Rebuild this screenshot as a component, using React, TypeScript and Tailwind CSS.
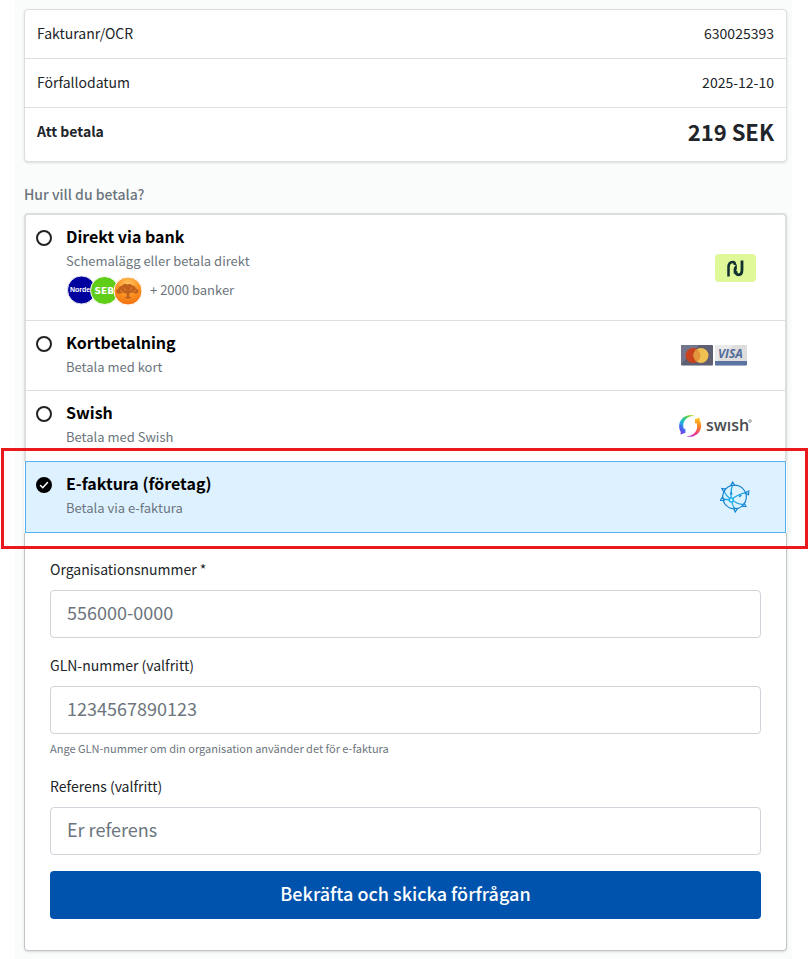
import { useState, type ReactNode } from "react";

function BankLogos() {
  return (
    <svg width="76" height="30" viewBox="0 0 76 30" aria-hidden="true">
      <defs>
        <radialGradient id="orange" cx="0.5" cy="0.25" r="0.75">
          <stop offset="0" stopColor="#ffc45c" />
          <stop offset="0.6" stopColor="#fb8e1f" />
          <stop offset="1" stopColor="#f0700f" />
        </radialGradient>
      </defs>
      <circle cx="15.5" cy="15" r="14" fill="#00009e" stroke="#e6e6ee" />
      <text x="4" y="17" fontSize="7" fontWeight="bold" fill="#fff" fontFamily="Liberation Sans, sans-serif">
        Norde
      </text>
      <circle cx="38.5" cy="15.500" r="14" fill="#60cd18" stroke="#fff" />
      <text x="28.500" y="18.500" fontSize="9" fontWeight="bold" fill="#fff" fontFamily="DejaVu Sans, sans-serif">
        SEB
      </text>
      <circle cx="62" cy="16" r="14" fill="url(#orange)" stroke="#fff" />
      <g fill="#c0601c">
        <path d="M51 17.500c-2-1 0-3.500 1.500-3.500-.5-2 2-3.500 3.500-3 .5-2 3.500-2.500 5-1.500 2-1.200 4.500-.5 5 1 2-.5 4 1 3.500 3 2 0 4 2.500 2.500 4-1 1.500-3 1.500-4 .5l-2.500-.5-2 1h-4l-2-1-2.500.7c-1.500 1-4 .8-4-.7z" />
        <path d="M60.800 17h2.400v4.500l3 1.700-3-.2-.4 1.200-.8-.9-.8.9-.4-1.200-3 .2 3-1.700z" />
      </g>
      <path d="M54 15.500l3 1.500M58 12.500l2 3.500M66 12.500l-2 3.500M70 15.500l-3 1.500" stroke="#f08a2c" strokeWidth="0.800" />
    </svg>
  );
}

function DirectLogo() {
  return (
    <svg width="41" height="28" viewBox="0 0 41 28" aria-hidden="true">
      <rect width="41" height="28" rx="4" fill="#dff998" />
      <g fill="none" stroke="#10302f" strokeWidth="2.500">
        <path d="M13.500 22.500V13.500Q13.500 8 17.800 8q2.200 0 2.200 3" />
        <path d="M20.800 17q0 3.800 2.700 3.800 3.500 0 3.500-5V6.500" strokeWidth="2.800" />
      </g>
      <path d="M18.600 15.500q.3-3 3.200-5.500v5q-.2 3-3 5.500z" fill="#10302f" />
    </svg>
  );
}

function CardLogos() {
  return (
    <svg width="75" height="21" viewBox="0 0 75 21" aria-label="Mastercard, Visa" role="img">
      <rect width="32" height="20.500" rx="1" fill="#5f5f74" />
      <path d="M1 0H18L0 19V1z" fill="#74758b" />
      <circle cx="12" cy="10.500" r="7.500" fill="#c9431f" />
      <circle cx="20" cy="10.500" r="7.500" fill="#f0c052" />
      <path d="M16 4.200a7.500 7.500 0 0 1 0 12.600 7.500 7.500 0 0 1 0-12.600z" fill="#e2953a" />
      <rect x="34" width="32" height="20.500" rx="1" fill="#dedddc" />
      <path d="M35 0h18L36 16h-2V1z" fill="#e9e9e9" />
      <path d="M34 16h32v3.500a1 1 0 0 1-1 1H35a1 1 0 0 1-1-1z" fill="#5c74a3" />
      <text x="37" y="13" fontSize="12" fontWeight="bold" fontStyle="italic" fill="#526b9b" fontFamily="Open Sans, sans-serif">
        VISA
      </text>
    </svg>
  );
}

function SwishLogo() {
  return (
    <svg width="77" height="24" viewBox="0 0 77 24" aria-label="Swish" role="img">
      <defs>
        <linearGradient id="swish-left" x1="0.8" y1="0" x2="0.2" y2="1">
          <stop offset="0" stopColor="#b8dc22" />
          <stop offset="0.25" stopColor="#3ccb62" />
          <stop offset="0.55" stopColor="#1eb6dc" />
          <stop offset="0.75" stopColor="#3d6df0" />
          <stop offset="1" stopColor="#7a35e8" />
        </linearGradient>
        <linearGradient id="swish-right" x1="0.5" y1="0" x2="0.3" y2="1">
          <stop offset="0" stopColor="#ffc21c" />
          <stop offset="0.45" stopColor="#f7752b" />
          <stop offset="0.75" stopColor="#ef3d78" />
          <stop offset="1" stopColor="#c33de0" />
        </linearGradient>
      </defs>
      <path d="M15.500 1.700C9-.5 1.500 3.500.3 10.500c-.5 3 .3 5.700 1.500 7.500l-.3 2.500 5-1.700-.2-4.500-1.300 1C3 11 5 4.500 11 2.500q2-.8 4.500-.8z" fill="url(#swish-left)" />
      <path d="M7.200 22.200c6.500 2.200 13.500-1.700 14.800-8.700.5-3-.3-5.700-1.500-7.500l.2-2.500-4.700 1.700v4.500l1.300-1C19.500 13 17.500 19.500 11.500 21.400q-2 .8-4.300.8z" fill="url(#swish-right)" />
      <text x="27" y="17" fontSize="16" fontWeight="600" fill="#4a4b4f" fontFamily="Open Sans, sans-serif">
        swısh
      </text>
      <circle cx="71" cy="7" r="1.300" fill="none" stroke="#77787b" strokeWidth="0.800" />
    </svg>
  );
}

function NetworkLogo() {
  return (
    <svg width="36" height="32" viewBox="0 0 36 32" fill="none" stroke="#1685d3" aria-hidden="true">
      <circle cx="14.500" cy="16" r="11.800" strokeWidth="1.200" />
      <g stroke="#20a7e4" strokeWidth="1.300">
        <path d="M12.700 3q-2.500 7-1.400 16M3.300 9.300q3 6 8 9.700M27 11.700q-9 1-15.700 7.300M24.300 24q-7-1-13-5M15.700 29q-3.500-4-4.400-10M2 18l9.300 1" />
      </g>
      <g fill="#def1ff" strokeWidth="1.200">
        <path d="M12.700 1l2 3.300h-4zM1.800 7.500l3.700.3-1.700 3.300zM28.800 10l-.3 3.800-3.300-2zM2.500 16l1.700 3.400-3.900.1zM26 25.500l-3.700-.1 1.900-3.200zM15.200 31l-1.500-3.600 3.800.2z" />
      </g>
      <circle cx="11.300" cy="19" r="2" stroke="#19b4ed" strokeWidth="1.500" fill="#def1ff" />
      <path d="M11.300 9.500 12.700 13.500h-3zM18.500 14.500l3.800-.7-2.600 3z" fill="#1692da" stroke="none" />
    </svg>
  );
}

type OptionProps = {
  value: string;
  title: string;
  text: string;
  logo: ReactNode;
  selected: string;
  onSelect: (value: string) => void;
  children?: ReactNode;
};

function Option({ value, title, text, logo, selected, onSelect, children }: OptionProps) {
  return (
    <label className="flex cursor-pointer items-center pr-[29px] pb-[11px] pt-[9px]">
      <span className="grid w-10 shrink-0 place-items-center self-start pt-[6px] pr-1">
        <input
          type="radio"
          name="method"
          value={value}
          checked={selected === value}
          onChange={() => onSelect(value)}
          className="peer col-start-1 row-start-1 size-4 appearance-none rounded-full border-2 border-[#222] bg-white checked:border-black checked:bg-black"
        />
        <svg viewBox="0 0 16 16" className="invisible col-start-1 row-start-1 size-4 peer-checked:visible" aria-hidden="true">
          <path d="M4.500 8.500 6.800 10.700 11.500 5.500" fill="none" stroke="#fff" strokeWidth="1.500" strokeLinecap="round" />
        </svg>
      </span>
      <span className="flex-1">
        <span className="mb-px block text-base leading-6 font-bold text-black">{title}</span>
        <span className="block text-[13px] leading-6 text-[#6c757d]">{text}</span>
        {children}
      </span>
      <span className="pt-0.5">{logo}</span>
    </label>
  );
}

type FieldProps = {
  id: string;
  label: string;
  placeholder: string;
  hint?: string;
  required?: boolean;
};

function Field({ id, label, placeholder, hint, required }: FieldProps) {
  return (
    <div className="mb-4">
      <label htmlFor={id} className="mb-[10px] block text-sm leading-[22px]">
        {label}
      </label>
      <input
        id={id}
        type="text"
        required={required}
        placeholder={placeholder}
        className="block h-12 w-full rounded border border-[#ced4da] bg-white px-4 pb-1 text-lg placeholder:text-[#6c757d]"
      />
      {hint && <p className="mt-1 text-[11px] leading-[21px] text-[#6c757d]">{hint}</p>}
    </div>
  );
}

export default function App() {
  const [method, setMethod] = useState("efaktura");
  const shared = { selected: method, onSelect: setMethod };

  return (
    <main className="mr-[17px] ml-[15px] bg-[#fafcfb] pt-[9px] pr-[5px] pb-2 pl-[9px] font-['Noto_Sans_CJK_SC','Source_Sans_3',sans-serif] text-[#212529]">
      {/* Invoice summary */}
      <dl className="divide-y divide-[#dedfe0] rounded border border-[#dcdedf] bg-white text-sm leading-6 shadow-sm">
        <div className="flex justify-between px-3 pt-[11px] pb-[13px]">
          <dt>Fakturanr/OCR</dt>
          <dd>630025393</dd>
        </div>
        <div className="flex justify-between px-3 pt-[11px] pb-[13px]">
          <dt>Förfallodatum</dt>
          <dd>2025-12-10</dd>
        </div>
        <div className="flex justify-between px-3 pt-[11px] pb-[18px] font-bold">
          <dt>Att betala</dt>
          <dd className="text-[22px] leading-6">219 SEK</dd>
        </div>
      </dl>

      <h2 id="method-title" className="mt-5 mb-[7px] text-sm leading-6 font-medium text-[#6c757d]">
        Hur vill du betala?
      </h2>

      <div className="rounded bg-white shadow-sm">
        <div role="radiogroup" aria-labelledby="method-title">
          <div className="divide-y divide-[#dedede] rounded-t border-2 border-b-0 border-[#dedede] pb-px">
            <Option {...shared} value="bank" title="Direkt via bank" text="Schemalägg eller betala direkt" logo={<DirectLogo />}>
              <span className="mb-0.5 flex items-center gap-2 text-[13px] leading-[34px] text-[#6c757d]">
                <BankLogos />+ 2000 banker
              </span>
            </Option>
            <Option {...shared} value="kort" title="Kortbetalning" text="Betala med kort" logo={<CardLogos />} />
            <Option {...shared} value="swish" title="Swish" text="Betala med Swish" logo={<SwishLogo />} />
          </div>

          <div className="relative mx-px border border-[#52b2f2] bg-[#def1ff] pb-px">
            <Option {...shared} value="efaktura" title="E-faktura (företag)" text="Betala via e-faktura" logo={<NetworkLogo />} />
            {/* Highlight frame */}
            <div className="pointer-events-none absolute -top-[14px] -right-[23px] -bottom-[17px] -left-[25px] border-3 border-[#e9191e]" />
          </div>
        </div>

        <form className="rounded-b border border-t-0 border-[#c3c4ca] px-[25px] pt-[25px] pb-[31px]" onSubmit={(e) => e.preventDefault()}>
          <Field id="orgnr" label="Organisationsnummer *" placeholder="556000-0000" required />
          <Field
            id="gln"
            label="GLN-nummer (valfritt)"
            placeholder="1234567890123"
            hint="Ange GLN-nummer om din organisation använder det för e-faktura"
          />
          <Field id="ref" label="Referens (valfritt)" placeholder="Er referens" />
          <button type="submit" className="h-12 w-full rounded bg-[#0053ad] pb-1 text-lg font-medium text-white">
            Bekräfta och skicka förfrågan
          </button>
        </form>
      </div>
    </main>
  );
}
